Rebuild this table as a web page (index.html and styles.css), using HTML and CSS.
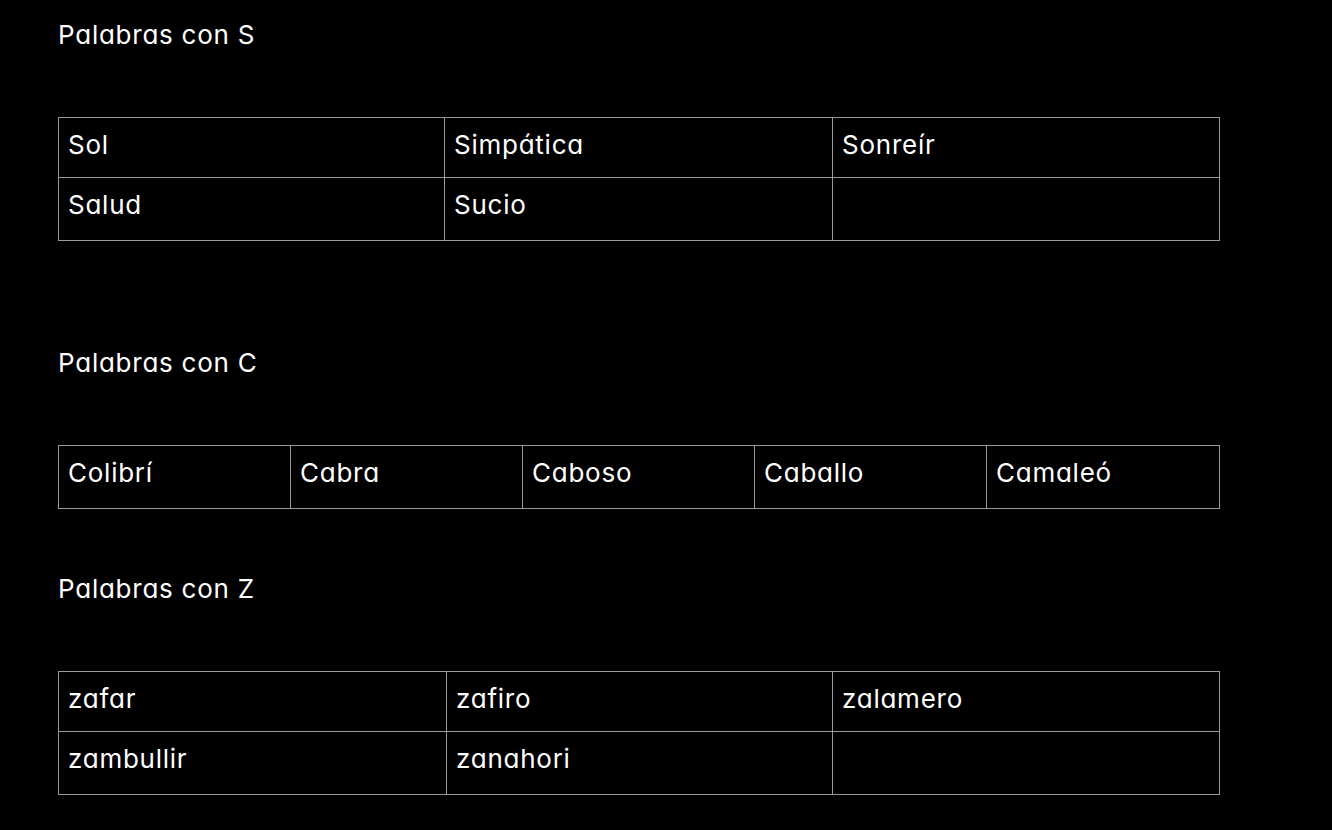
FILE: index.html
```html
<!DOCTYPE html>
<html lang="es">
<head>
<meta charset="utf-8">
<title>Palabras</title>
<link rel="stylesheet" href="styles.css">
</head>
<body>
<main class="page">
  <h2 class="title">Palabras con S</h2>
  <table class="words">
    <colgroup><col class="c386"><col class="c388"><col class="c387"></colgroup>
    <tr><td>Sol</td><td>Simpática</td><td>Sonreír</td></tr>
    <tr class="last"><td>Salud</td><td>Sucio</td><td></td></tr>
  </table>

  <h2 class="title title-far">Palabras con C</h2>
  <table class="words">
    <colgroup><col class="c232"><col class="c232"><col class="c232"><col class="c232"><col class="c233"></colgroup>
    <tr class="last"><td>Colibrí</td><td>Cabra</td><td>Caboso</td><td>Caballo</td><td>Camaleó</td></tr>
  </table>

  <h2 class="title title-near">Palabras con Z</h2>
  <table class="words">
    <colgroup><col class="c388"><col class="c386"><col class="c387"></colgroup>
    <tr><td>zafar</td><td>zafiro</td><td>zalamero</td></tr>
    <tr class="last"><td>zambullir</td><td>zanahori</td><td></td></tr>
  </table>
</main>
</body>
</html>
```

FILE: styles.css
```css
html, body {
  margin: 0;
  background: #000;
}
body {
  color: #fff;
  font-family: Inter, "Liberation Sans", sans-serif;
  font-feature-settings: "cv11" 1;
  font-size: 26px;
  line-height: 32px;
  letter-spacing: 0.75px;
}
.page {
  padding: 19px 0 0 58px;
}
.title {
  margin: 0;
  font-size: 26px;
  font-weight: 400;
  line-height: 32px;
}
.title-far { margin-top: 106px; }
.title-near { margin-top: 64px; }
.words {
  margin-top: 66px;
  border-collapse: collapse;
  table-layout: fixed;
  width: 1162px;
}
.words td {
  border: 1px solid #9a9a9a;
  padding: 11px 9px 16px;
  vertical-align: top;
  height: 32px;
  white-space: nowrap;
  overflow: hidden;
}
.words tr.last td { padding-bottom: 19px; }
.c386 { width: 386px; }
.c387 { width: 387px; }
.c388 { width: 388px; }
.c232 { width: 232px; }
.c233 { width: 233px; }
```
